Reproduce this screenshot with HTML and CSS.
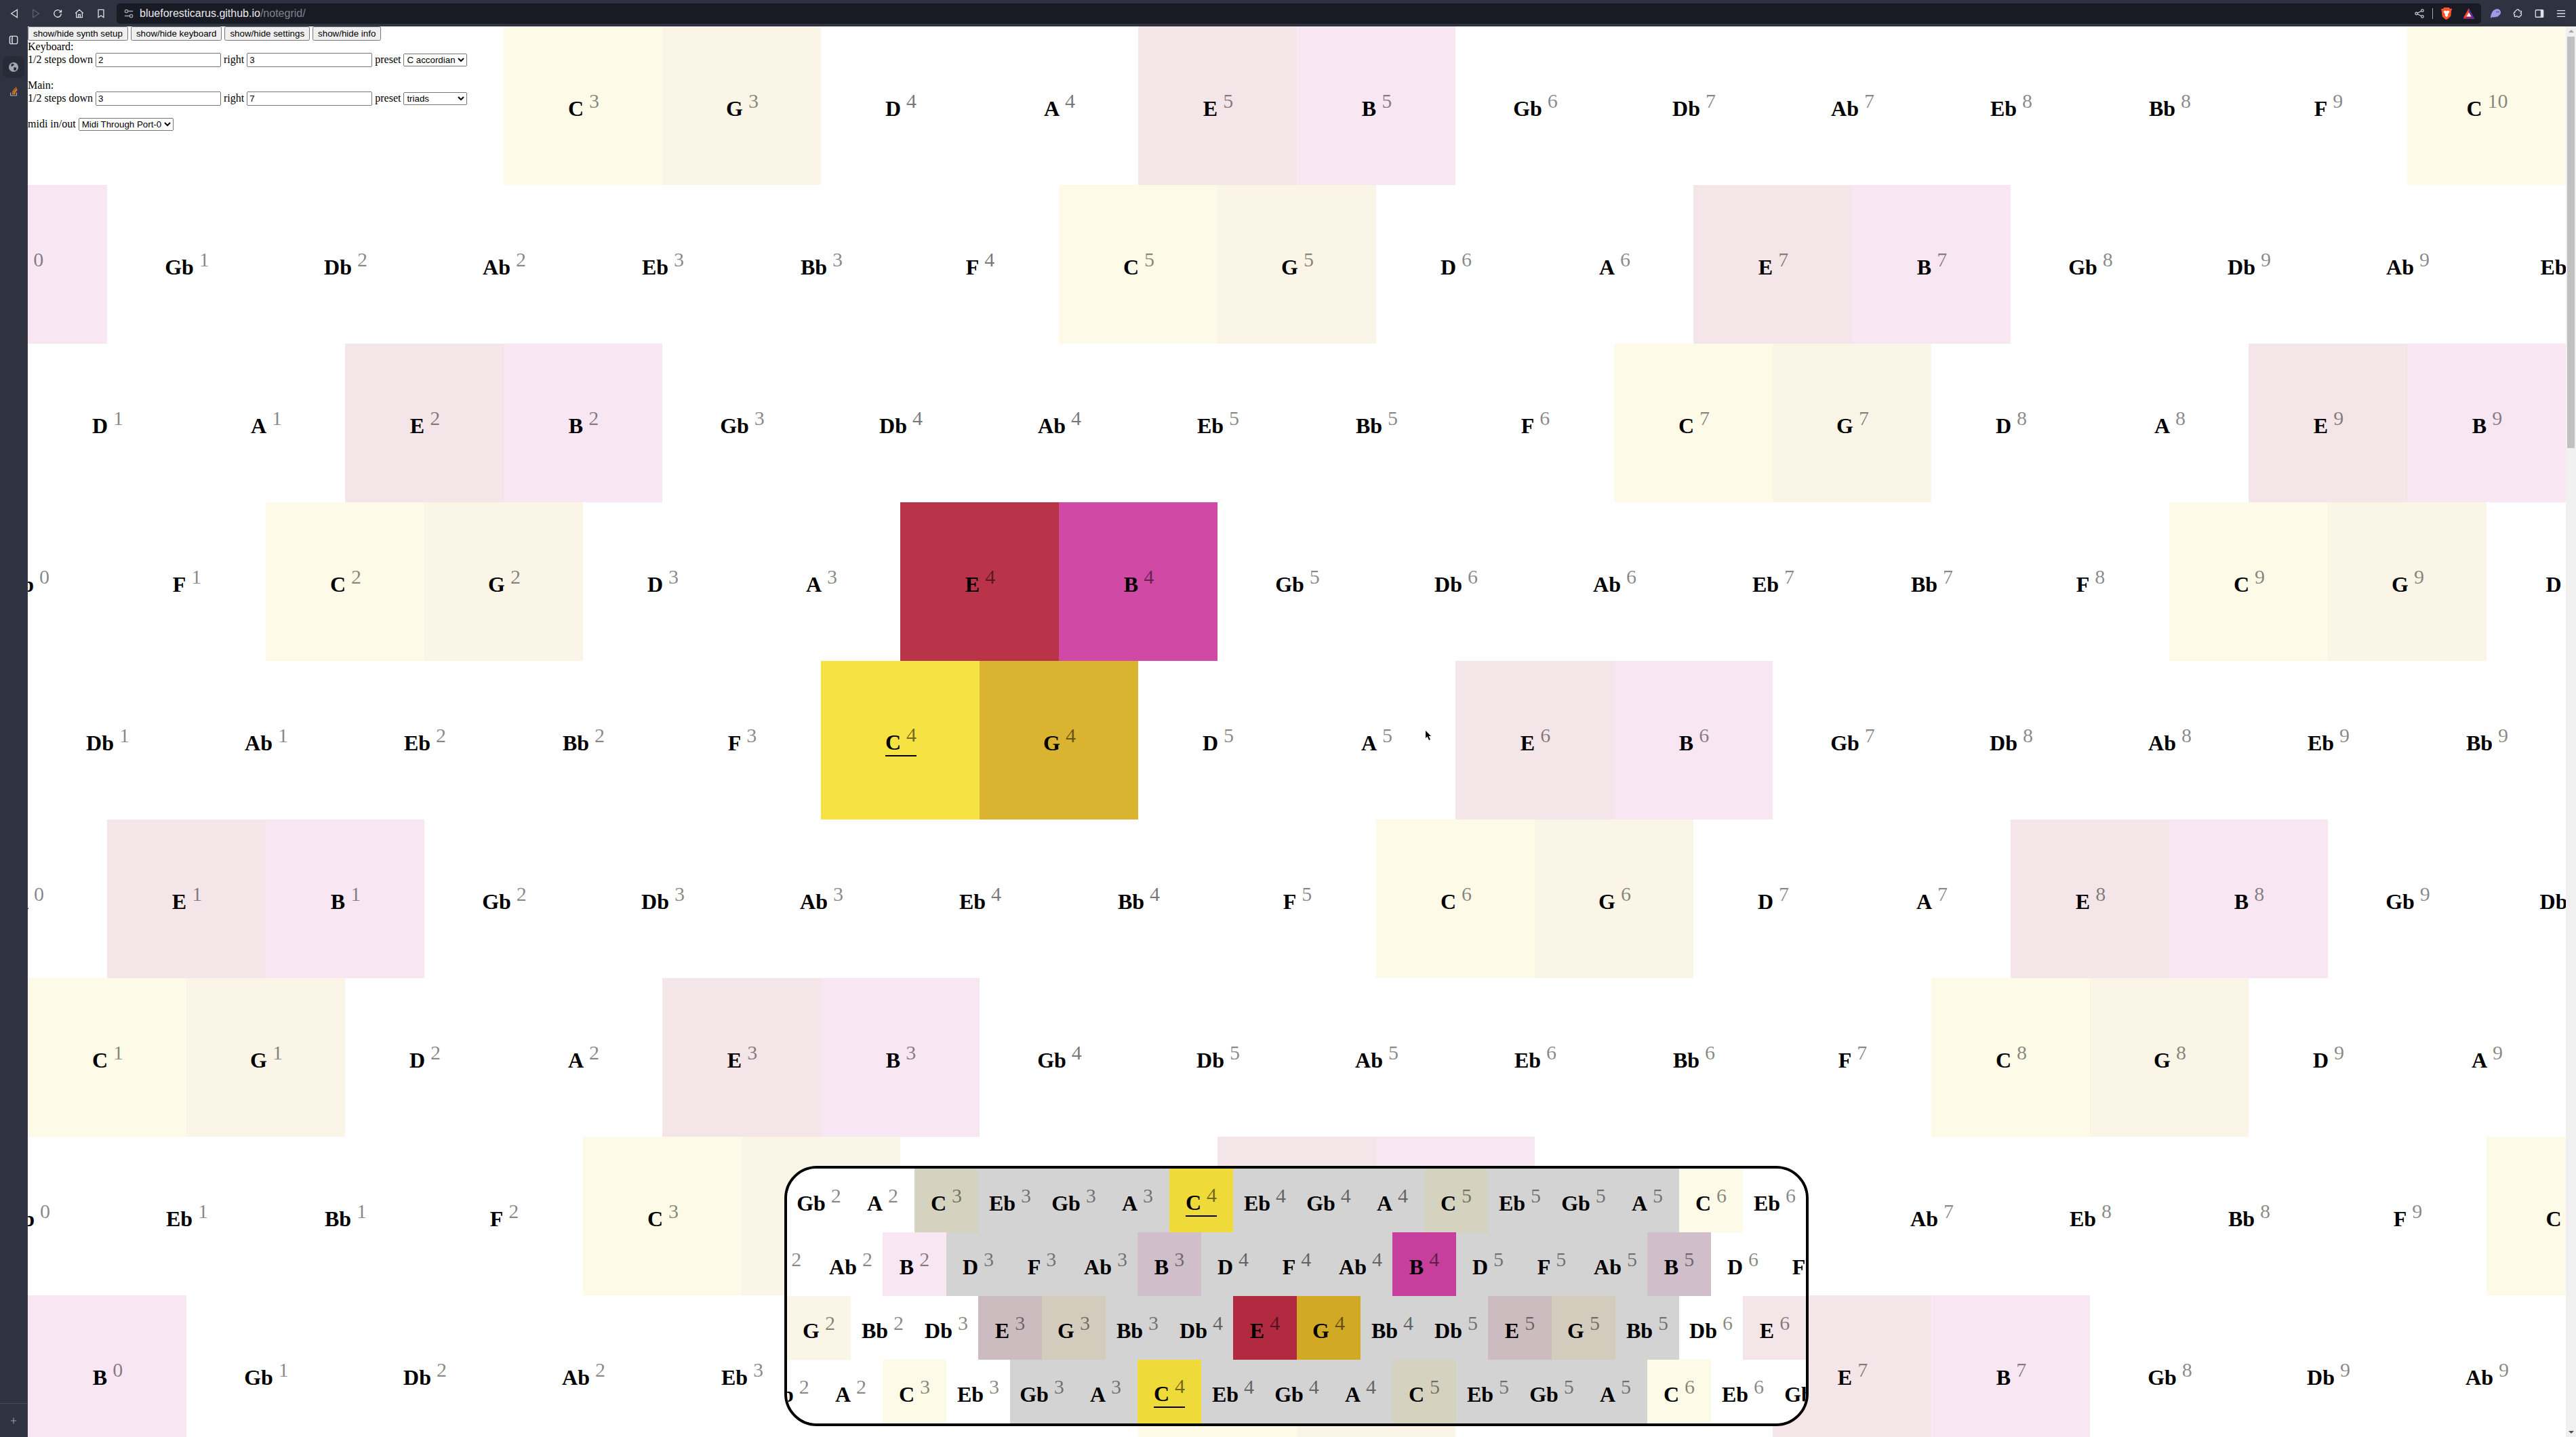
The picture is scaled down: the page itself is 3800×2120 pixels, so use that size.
FILE: index.html
```html
<!DOCTYPE html>
<html lang="en">
<head>
    <meta charset="UTF-8">
    <title>notegrid</title>
    <link rel="stylesheet" href="styles.css">
</head>
<body>
    <header class="toolbar">
        <div class="nav-icons">
            <svg class="icon" viewBox="0 0 16 16"><path d="M13 1.500 3 8l10 6.500z"/></svg>
            <svg class="icon dim" viewBox="0 0 16 16"><path d="M3 1.500 13 8 3 14.500z"/></svg>
            <svg class="icon" viewBox="0 0 16 16"><path d="M14 8a6 6 0 1 1-2-4.500"/><path class="solid" d="M15 1v5.200H9.800z"/></svg>
            <svg class="icon" viewBox="0 0 16 16"><path d="M1.500 7.500 8 1.500l6.500 6M3 6.500V14.500h10V6.500M6.500 14.500V9.500h3v5"/></svg>
            <svg class="icon" viewBox="0 0 16 16"><path d="M3.500 1.500h9v13L8 11.500l-4.500 3z"/></svg>
        </div>
        <div class="url-bar">
            <svg class="icon tune" viewBox="0 0 16 16"><circle cx="4" cy="4" r="2.500"/><path d="M7 4h8M1 12h8"/><circle cx="12" cy="12" r="2.500"/></svg>
            <span class="url">blueforesticarus.github.io<span class="url-path">/notegrid/</span></span>
            <div class="url-right">
                <svg class="icon share" viewBox="0 0 16 16"><circle cx="3" cy="8" r="2"/><circle cx="13" cy="3" r="2"/><circle cx="13" cy="13" r="2"/><path d="M5 7l6-3M5 9l6 3"/></svg>
                <span class="url-sep"></span>
                <svg class="badge lion" viewBox="0 0 18 20"><path fill="#fb542b" d="M5 0h8l2 2 3-.5-1 5-1 8-5 4.500L9 20l-2-.5-5-4.500-1-8-1-5L3 2z"/><path fill="#fff" d="M4 6l3-1 2 1 2-1 3 1-1 3-2 2 1 2-3 3-3-3 1-2-2-2z"/></svg>
                <svg class="badge bat" viewBox="0 0 20 18"><path fill="#662d91" d="M10 0l10 18H0z"/><path fill="#ff4724" d="M10 0 1 16h8z"/><path fill="#9e1f63" d="M10 9l6 8H4z"/><path fill="#fff" d="M10 7l4 7H6z"/></svg>
            </div>
        </div>
        <div class="ext-icons">
            <svg class="badge ghost" viewBox="0 0 18 16"><path fill="#a397e8" d="M0 15C1 6 5 0 12 0c4 0 6 3 6 6 0 4-3 5-5 7l-2 1-1-1-2 2-1-1-2 1-2-1-2 2z"/><circle cx="11" cy="5" r="1" fill="#2f3241"/><circle cx="14" cy="5" r="1" fill="#2f3241"/></svg>
            <svg class="icon" viewBox="0 0 16 16"><path d="M6 3c0-3 5-2 4 0 0 1 3 0 4 1 1 2-1 3-1 3 2 1 2 5-1 5 0 2-3 3-4 1-1-2-3 1-5 0-1-1-1-2 0-3-2-1-2-4 0-4 0-2 3-4 3-3z"/></svg>
            <svg class="icon" viewBox="0 0 16 16"><rect x="1.500" y="2" width="13" height="12" rx="1"/><path class="solid" d="M10 2h4.500v12H10z"/></svg>
            <svg class="icon" viewBox="0 0 16 16"><path d="M1 3h14M1 8h14M1 13h14"/></svg>
        </div>
    </header>

    <div class="browser-body">
        <nav class="sidebar">
            <svg class="icon side-icon" viewBox="0 0 16 16"><rect x="1.500" y="1.500" width="13" height="13" rx="2.500"/><path d="M6 2v12M3.500 5h1M3.500 8h1M3.500 11h1"/></svg>
            <div class="side-tab">
                <svg class="globe" viewBox="0 0 16 16"><circle cx="8" cy="8" r="8" fill="#a5a7b0"/><path fill="#272a37" d="M4 3l3-1 2 2-2 2-3 1zM9 8l4 1-1 4-3 1-1-3z"/></svg>
            </div>
            <svg class="side-icon so" viewBox="0 0 16 18"><path fill="none" stroke="#bcbbbb" stroke-width="1.300" d="M2 11v6h12v-6"/><path fill="none" stroke="#f48024" stroke-width="1.500" d="M4.500 14h7M4.700 11.500l7 .7M5.500 8.500l6.600 2M7 5.600l6 3.500M9.300 3l4.500 5M12.300 .5l2.500 6.500"/></svg>
            <div class="side-bottom">
                <svg class="icon plus" viewBox="0 0 16 16"><path d="M8 1v14M1 8h14"/></svg>
            </div>
        </nav>

        <main class="viewport">
            <div class="note-grid" id="mainGrid"></div>

            <section class="settings">
                <button>show/hide synth setup</button>
                <button>show/hide keyboard</button>
                <button>show/hide settings</button>
                <button>show/hide info</button>
                <br>
                Keyboard:<br>
                1/2 steps down <input type="text" value="2"> right <input type="text" value="3">
                preset <select class="preset"><option>C accordian</option></select>
                <br><br>
                Main:<br>
                1/2 steps down <input type="text" value="3"> right <input type="text" value="7">
                preset <select class="preset"><option>triads</option></select>
                <br><br>
                midi in/out <select class="midi"><option>Midi Through Port-0</option></select>
            </section>

            <section class="keyboard">
                <div class="note-grid" id="keyGrid"></div>
            </section>

            <svg class="cursor" viewBox="0 0 9 15"><path d="M0 0v11l2.500-2.500L5 14l2-1-2.500-5H8z"/></svg>
        </main>

        <div class="scrollbar">
            <span class="arrow-up"></span>
            <span class="thumb"></span>
            <span class="arrow-down"></span>
        </div>
    </div>

    <script src="script.js"></script>
</body>
</html>
```

FILE: styles.css
```css
* {
    box-sizing: border-box;
}

html, body {
    height: 100%;
}

body {
    margin: 0;
    overflow: hidden;
    display: flex;
    flex-direction: column;
    background: #fff;
    font-family: "Liberation Serif", serif;
    font-size: 16px;
}

/* browser frame */
.toolbar {
    height: 39px;
    flex: none;
    display: flex;
    align-items: center;
    background: #2f3241;
}

.icon {
    width: 14px;
    height: 14px;
    display: block;
    fill: none;
    stroke: #dfe0e4;
    stroke-width: 1.5;
}

.icon .solid {
    fill: #dfe0e4;
    stroke: none;
}

.icon.dim {
    stroke: #5d6070;
}

.nav-icons {
    width: 172px;
    flex: none;
    display: flex;
    gap: 18px;
    padding-left: 14px;
}

.url-bar {
    width: 3488px;
    height: 30px;
    flex: none;
    display: flex;
    align-items: center;
    background: #191b24;
    border-radius: 5px;
    color: #e8e9ec;
    font-family: "Liberation Sans", sans-serif;
    font-size: 16px;
}

.tune {
    margin: 0 9px 0 11px;
    stroke: #a5a7b0;
}

.url-path {
    color: #80828d;
}

.url-right {
    margin-left: auto;
    display: flex;
    align-items: center;
    padding-right: 9px;
}

.share {
    stroke: #c3c4c9;
}

.url-sep {
    width: 1px;
    height: 16px;
    margin: 0 12px;
    background: #a5a7b0;
}

.badge {
    display: block;
}

.lion {
    width: 16px;
    height: 18px;
}

.bat {
    width: 18px;
    height: 16px;
    margin-left: 16px;
}

.ghost {
    width: 15px;
    height: 14px;
}

.ext-icons {
    flex: 1;
    display: flex;
    align-items: center;
    gap: 18px;
    padding-left: 14px;
}

.browser-body {
    flex: 1;
    min-height: 0;
    display: flex;
}

.sidebar {
    width: 41px;
    flex: none;
    display: flex;
    flex-direction: column;
    align-items: center;
    background: #2f3241;
    border-right: 1px solid #3d404e;
}

.side-icon {
    margin-top: 13px;
}

.side-tab {
    width: 32px;
    height: 32px;
    margin-top: 17px;
    display: flex;
    align-items: center;
    justify-content: center;
    background: #272a37;
    border-radius: 8px;
}

.globe {
    width: 14px;
    height: 14px;
}

.so {
    width: 12px;
    height: 14px;
    margin-top: 13px;
}

.side-bottom {
    margin-top: auto;
    width: 100%;
    height: 50px;
    display: flex;
    align-items: center;
    justify-content: center;
    border-top: 1px solid #454856;
}

.plus {
    width: 10px;
    height: 10px;
    stroke: #a5a7b0;
}

.scrollbar {
    width: 15px;
    flex: none;
    display: flex;
    flex-direction: column;
    align-items: center;
    background: #f0f0f0;
    position: relative;
}

.thumb {
    width: 11px;
    height: 607px;
    margin-top: 6px;
    background: #c0c0c0;
}

.arrow-up, .arrow-down {
    width: 0;
    height: 0;
    border-left: 4px solid transparent;
    border-right: 4px solid transparent;
}

.arrow-up {
    margin-top: 5px;
    border-bottom: 4px solid #a3a3a3;
}

.arrow-down {
    margin-top: auto;
    margin-bottom: 5px;
    border-top: 4px solid #505050;
}

/* page */
.viewport {
    flex: 1;
    min-width: 0;
    position: relative;
    overflow: hidden;
}

.grid-row {
    display: flex;
}

.tile {
    flex: none;
    width: 234px;
    height: 234px;
    padding-left: 2px;
    display: flex;
    align-items: center;
    justify-content: center;
    white-space: nowrap;
    background: #fff;
}

.label {
    display: inline-block;
    font-size: 32px;
    font-weight: bold;
    line-height: 37px;
    color: #000;
}

.label.root {
    border-bottom: 2px solid #000;
}

.octave {
    margin-left: 8px;
    font-size: 30px;
    font-weight: normal;
    line-height: 1;
    vertical-align: 12px;
    color: rgba(0, 0, 0, 0.47);
}

.octave.mid {
    color: rgba(0, 0, 0, 0.54);
}

.tile.note-c { background: #fdfae8; }
.tile.note-g { background: #faf5e6; }
.tile.note-e { background: #f4e5e8; }
.tile.note-b { background: #f8e7f3; }

.tile.note-c.hit { background: #f7e244; }
.tile.note-g.hit { background: #dab331; }
.tile.note-e.hit { background: #ba3449; }
.tile.note-b.hit { background: #d04aa5; }

/* settings sit over the first row of the grid */
.settings {
    position: absolute;
    top: 0;
    left: 0;
    width: 702px;
    height: 234px;
    background: #fff;
}

.settings button,
.settings input,
.settings select {
    font-family: "Liberation Sans", sans-serif;
    font-size: 13.333px;
}

.settings input {
    width: 185px;
}

.preset {
    width: 94px;
}

.midi {
    width: 140px;
}

/* floating keyboard */
.keyboard {
    position: absolute;
    left: 1116px;
    bottom: 16px;
    width: 1511px;
    height: 384px;
    overflow: hidden;
    background: #fff;
    border: 4px solid #000;
    border-radius: 48px;
}

.keyboard .tile {
    width: 94px;
    height: 94px;
    padding-left: 0;
}

.keyboard .tile.in-span { background: #d3d3d3; }
.keyboard .tile.in-span.note-c { background: #d5d3bf; }
.keyboard .tile.in-span.note-g { background: #d3ccbd; }
.keyboard .tile.in-span.note-e { background: #ccbcc0; }
.keyboard .tile.in-span.note-b { background: #d0bfca; }

.keyboard .tile.in-span.note-c.hit { background: #eedb3a; }
.keyboard .tile.in-span.note-g.hit { background: #d2a925; }
.keyboard .tile.in-span.note-e.hit { background: #b12a40; }
.keyboard .tile.in-span.note-b.hit { background: #c63f9c; }

.cursor {
    position: absolute;
    left: 2062px;
    top: 1039px;
    width: 9px;
    height: 15px;
}
```

FILE: script.js
```js
const NAMES = ['C', 'Db', 'D', 'Eb', 'E', 'F', 'Gb', 'G', 'Ab', 'A', 'Bb', 'B'];
const CHORD = ['C', 'E', 'G', 'B'];
const C3 = 48;
const C4 = 60;

// Build one grid. Going down a row shifts half a tile left and drops by `down` semitones,
// going one tile right adds `right` semitones.
function buildGrid(el, opts) {
    for (let r = 0; r < opts.rows; r++) {
        const rowStart = opts.originX - r * opts.size / 2;
        // first column that still touches the left edge
        const first = Math.ceil((-opts.size - rowStart) / opts.size);
        const row = document.createElement('div');
        row.className = 'grid-row';
        row.style.marginLeft = (rowStart + first * opts.size) + 'px';

        const count = Math.ceil(opts.width / opts.size) + 2;
        for (let c = first; c < first + count; c++) {
            const pitch = opts.originPitch - opts.down * r + opts.right * c;
            row.appendChild(makeTile(pitch, opts.inSpan ? opts.inSpan(pitch, r) : false));
        }
        el.appendChild(row);
    }
}

function makeTile(pitch, inSpan) {
    const name = NAMES[pitch % 12];
    const octave = Math.floor(pitch / 12) - 1;

    const tile = document.createElement('div');
    tile.className = 'tile';
    if (CHORD.includes(name)) {
        tile.classList.add('note-' + name.toLowerCase());
        if (octave === 4) tile.classList.add('hit');
    }
    if (inSpan) tile.classList.add('in-span');

    const label = document.createElement('span');
    label.className = 'label';
    if (pitch === C4) label.classList.add('root');
    label.textContent = name;

    const sup = document.createElement('span');
    sup.className = 'octave';
    if (octave === 4) sup.classList.add('mid');
    sup.textContent = octave;
    label.appendChild(sup);

    tile.appendChild(label);
    return tile;
}

buildGrid(document.getElementById('mainGrid'), {
    rows: 9,
    size: 234,
    width: 3744,
    originX: 702,
    originPitch: C3,
    down: 4,
    right: 7
});

// keyboard: x measured from the inside of its border
buildGrid(document.getElementById('keyGrid'), {
    rows: 4,
    size: 94,
    width: 1503,
    originX: 188,
    originPitch: C3,
    down: 1,
    right: 3,
    inSpan: (pitch, r) => pitch >= C3 + 2 * r && pitch < 84
});
```
